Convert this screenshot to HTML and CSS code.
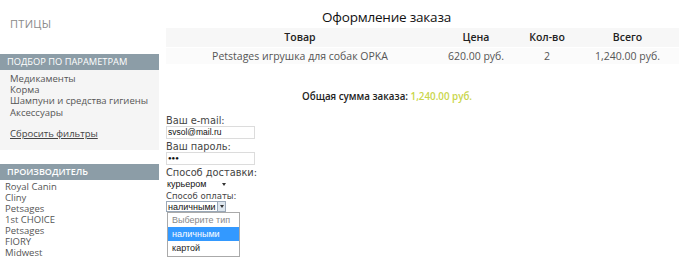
FILE: index.html
```html
<!DOCTYPE html>
<html lang="ru">
<head>
<meta charset="utf-8">
<link rel="stylesheet" href="styles.css">
</head>
<body>
<div class="page">
  <aside class="sidebar">
    <div class="cat-title">ПТИЦЫ</div>
    <div class="block">
      <div class="block-head">ПОДБОР ПО ПАРАМЕТРАМ</div>
      <div class="block-body">
        <ul class="links">
          <li>Медикаменты</li>
          <li>Корма</li>
          <li>Шампуни и средства гигиены</li>
          <li>Аксессуары</li>
        </ul>
        <a class="reset" href="#">Сбросить фильтры</a>
      </div>
    </div>
    <div class="block maker">
      <div class="block-head bold">ПРОИЗВОДИТЕЛЬ</div>
      <ul class="makers">
        <li>Royal Canin</li>
        <li>Cliny</li>
        <li>Petsages</li>
        <li>1st CHOICE</li>
        <li>Petsages</li>
        <li>FIORY</li>
        <li>Midwest</li>
      </ul>
    </div>
  </aside>
  <main class="main">
    <h1 class="title">Оформление заказа</h1>
    <table class="order">
      <thead>
        <tr><th class="c1">Товар</th><th class="c2">Цена</th><th class="c3">Кол-во</th><th class="c4">Всего</th></tr>
      </thead>
      <tbody>
        <tr><td>Petstages игрушка для собак OPKA</td><td>620.00 руб.</td><td>2</td><td>1,240.00 руб.</td></tr>
      </tbody>
    </table>
    <div class="total">Общая сумма заказа: <span class="sum">1,240.00 руб.</span></div>
    <form class="form">
      <label class="lbl">Ваш e-mail:</label>
      <div class="input">svsol@mail.ru</div>
      <label class="lbl">Ваш пароль:</label>
      <div class="input pass">●●●</div>
      <label class="lbl">Способ доставки:</label>
      <div class="select deliv"><span>курьером</span><span class="arr"></span></div>
      <label class="lbl small">Способ оплаты:</label>
      <div class="select pay"><span>наличными</span><span class="btn"><span class="tri"></span></span></div>
      <ul class="dropdown">
        <li class="ph">Выберите тип</li>
        <li class="sel">наличными</li>
        <li>картой</li>
      </ul>
    </form>
  </main>
</div>
</body>
</html>
```
FILE: styles.css
```css
* { box-sizing: border-box; }
html, body { margin: 0; padding: 0; background: #fff; }
body { font-family: "Open Sans", sans-serif; color: #444; width: 689px; height: 275px; overflow: hidden; }
ul { list-style: none; margin: 0; padding: 0; }
.page { display: flex; }
.sidebar { width: 159px; flex: none; }
.cat-title { font-size: 11px; color: #8a8a8a; padding: 16px 0 0 10px; height: 54px; line-height: 15px; letter-spacing: 0.3px; }
.block-head { background: #8c9da7; color: #fff; font-size: 9.3px; height: 16px; line-height: 16px; padding-left: 7px; }
.block-head.bold { font-weight: 600; font-size: 9px; }
.block-body { background: #f5f5f5; padding: 3px 0 11px 10px; }
.links li { font-size: 9.5px; line-height: 11.2px; color: #555; }
.reset { display: block; margin-top: 10px; font-size: 9.5px; color: #444; text-decoration: underline; line-height: 11px; }
.maker { margin-top: 14px; }
.makers { padding: 1px 0 0 5px; }
.makers li { font-size: 9.5px; line-height: 11.1px; color: #555; }
.main { flex: 1; padding-left: 7px; }
.title { font-size: 13.5px; font-weight: normal; color: #111; margin: 9px 0 2px 0; text-align: center; padding-right: 82px; line-height: 17px; letter-spacing: -0.2px; }
.order { border-collapse: collapse; width: 513px; font-size: 10.5px; }
.order th { background: #f7f7f7; font-weight: 600; color: #222; height: 19px; padding: 0; border-bottom: 1px solid #fff; }
.order td { text-align: center; color: #555; height: 17px; padding: 0; background: #fbfbfb; }
.c1 { width: 268px; } .c2 { width: 84px; } .c3 { width: 58px; } .c4 { width: 103px; }
.total { margin: 26px 0 0 136px; font-size: 9.8px; font-weight: 600; color: #222; line-height: 14px; }
.sum { color: #c9d64b; }
.form { margin-top: 11px; display: flex; flex-direction: column; align-items: flex-start; font-family: "DejaVu Sans", sans-serif; }
.lbl { font-size: 9.8px; color: #444; line-height: 11px; }
.lbl.small { font-size: 8.5px; line-height: 10px; }
.input { width: 89px; height: 13px; border: 1px solid #dcdcdc; font-family: "Liberation Sans", sans-serif; font-size: 8.5px; line-height: 11px; padding-left: 1px; color: #111; margin-bottom: 2px; }
.input.pass { font-size: 6px; }
.select { display: flex; align-items: center; font-family: "Liberation Sans", sans-serif; font-size: 9px; color: #111; height: 12px; }
.deliv { width: 63px; justify-content: space-between; padding: 0 3px 0 1px; margin-bottom: 1px; }
.deliv .arr { width: 0; height: 0; border-left: 2.5px solid transparent; border-right: 2.5px solid transparent; border-top: 3px solid #333; }
.pay { width: 60px; border: 1px solid #9aa8b8; height: 11px; padding-left: 1px; justify-content: space-between; }
.btn { width: 8px; height: 9px; border-left: 1px solid #9aa8b8; background: #dde6ee; display: flex; align-items: center; justify-content: center; }
.tri { width: 0; height: 0; border-left: 2.5px solid transparent; border-right: 2.5px solid transparent; border-top: 3px solid #333; }
.dropdown { width: 73px; border: 1px solid #aaa; font-family: "Liberation Sans", sans-serif; font-size: 9px; color: #222; padding: 0 0 1px; margin-left: 1px; }
.dropdown li { height: 14px; line-height: 14px; padding-left: 4px; }
.dropdown .ph { color: #888; }
.dropdown .sel { background: #3399ff; color: #fff; }
```
